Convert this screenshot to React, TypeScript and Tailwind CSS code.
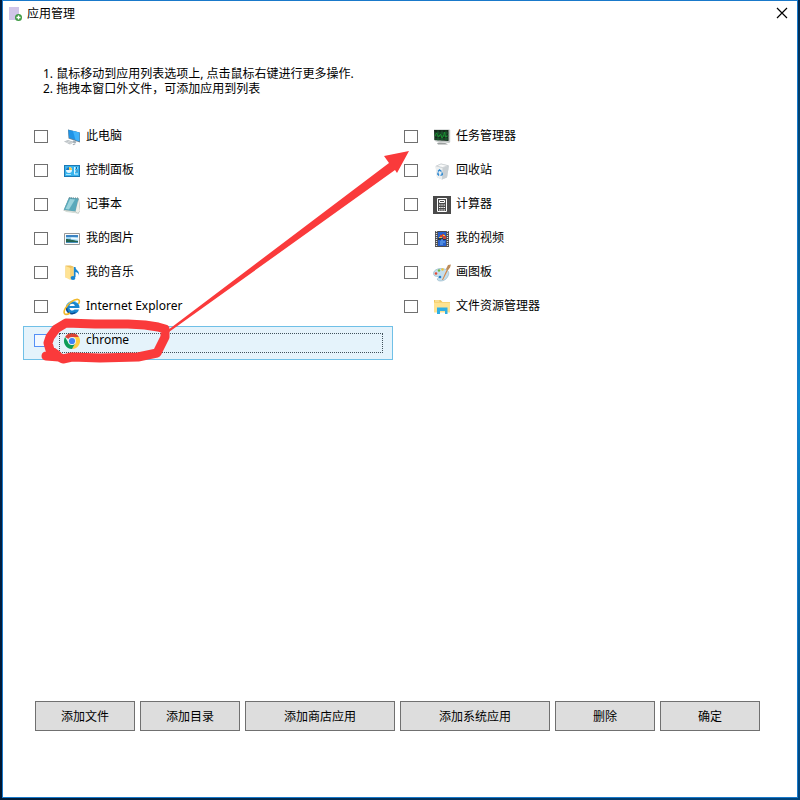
import { useState } from "react";
import type { ReactNode } from "react";

interface IApp {
	name: string;
	icon: ReactNode;
}

function Icon({ children }: { children: ReactNode }) {
	return (
		<svg className="w-[18px] h-[18px] shrink-0" viewBox="0 0 18 18" aria-hidden="true">
			{children}
		</svg>
	);
}

const ComputerIcon = () => (
	<Icon>
		<path d="M5 1.500 17 4.500V14.500L5.500 10.500Z" fill="#6c8292" />
		<path d="M5.300 1.800 16.300 4.500V13.300L6 9.800Z" fill="#1f93e6" />
		<path d="M10 3 16.300 4.500V13.300L12.500 12Z" fill="#3fb2fb" />
		<path d="M10 12.500 13.500 13.500 12.500 15.500 9.500 14.500Z" fill="#a4b0b8" />
		<path d="M1 13.500 5 12 11 14 7 16.500Z" fill="#aeb5ba" />
		<path d="M2.500 13.700 8 15.500M4.500 13 9.500 14.600" stroke="#e9eced" strokeWidth=".7" />
		<path d="M9.500 16.300 11.500 15.500 12.500 16.200 10.500 17.200Z" fill="#a5adb2" />
	</Icon>
);

const ControlPanelIcon = () => (
	<Icon>
		<path d="M1 3h16v12H1z" fill="#1c79b4" />
		<path d="M2 4h14v10H2z" fill="#37b3ee" />
		<circle cx="6" cy="8" r="3" fill="#e7f7ff" />
		<path d="M6 8V5a3 3 0 0 0-3 3z" fill="#167ac5" />
		<path d="M6 8h3a3 3 0 0 0-3-3z" fill="#f5c84c" />
		<path d="M11 6h4M11 9h4M11 12h4" stroke="#d9f5ff" />
		<path d="M11.500 5v7" stroke="#d9f5ff" />
		<path d="M13.500 5v2M14 8v2" stroke="#15679b" />
		<path d="M3 12.500h5" stroke="#a5e6ff" />
	</Icon>
);

const NotepadIcon = () => (
	<Icon>
		<path d="M6 1.500 16 2.500 17 15 15.500 17.500 .5 14.500Z" fill="#8d9a9a" />
		<path d="M6 1.500 15.500 2.500 12.500 15.500 .8 13.800Z" fill="#5aa9bb" />
		<path d="M7 3 12 3.500 6 13.500 2.500 13Z" fill="#9ad3dc" />
		<path d="M15.500 3 17 15 15 17.200 12.500 15.500Z" fill="#eeefe9" />
		<path d="M.8 14 12.500 15.500 15 17.500 3 16Z" fill="#d6ded8" />
		<path d="M6 2h9.500" stroke="#68868d" strokeDasharray="1 1" />
	</Icon>
);

const PictureIcon = () => (
	<Icon>
		<path d="M1.500 3.500h15v11h-15z" fill="#fafafa" stroke="#989898" />
		<path d="M3 5h12v8H3z" fill="#9bd3f3" />
		<path d="M3 5h12v2H3z" fill="#3b83c3" />
		<path d="M3 9c4 0 6 1 12 2v2H3z" fill="#22634f" />
		<path d="M3 12.500h12" stroke="#4a91bd" />
		<path d="M8 8.500c2-.7 4 .5 7 .5" stroke="#effaff" strokeWidth="1.500" fill="none" />
	</Icon>
);

const MusicIcon = () => (
	<Icon>
		<path d="M2.500 1.500h5l3 1v12l-8-1z" fill="#eec260" />
		<path d="m2.500 2 5 2v12l-5-2.500z" fill="#ffe394" />
		<path d="M7.500 4 10.500 3v11l-3 2z" fill="#f7d377" />
		<path d="M11.700 3v10" stroke="#1685d2" strokeWidth="1.700" />
		<path d="M12 3c0 3 5 3 4 9 0-3-2-4-4-4z" fill="#1685d2" />
		<ellipse cx="10" cy="14" rx="2.400" ry="2" fill="#1685d2" />
	</Icon>
);

const ExplorerIcon = () => (
	<Icon>
		<path d="M16 11.500h-4.500c-1.500 2-5 1-5-1.500H16.500c.5-9-13.500-9-13.500-.5 0 8.500 11.500 8.500 13 2zM6.500 8c.4-3 5-3 5.300 0z" fill="#1986cf" />
		<path d="M4 7c1.500-4 7-5 10-2" stroke="#79d5f7" fill="none" />
		<path d="M3.500 9.500c0 6 5 7.500 9 5" stroke="#0b478d" strokeWidth="1.400" fill="none" />
		<path d="M15.500 6C18.500 0 13 .5 8 4 3 8 0 13 1.500 15.500c1 1.500 3.500.7 5.500-.5" stroke="#f0b82c" strokeWidth="1.600" fill="none" />
	</Icon>
);

const ChromeIcon = () => (
	<Icon>
		<path d="M9 9 2.070 5A8 8 0 0 1 15.930 5H9z" fill="#db4437" />
		<path d="M9 5h6.930A8 8 0 0 1 9 17l3.460-6z" fill="#ffcd40" />
		<path d="M2.070 5 5.540 11 9 13l3.460-2L9 17A8 8 0 0 1 2.070 5z" fill="#0f9d58" />
		<circle cx="9" cy="9" r="4" fill="#f1f1f1" />
		<circle cx="9" cy="9" r="3.100" fill="#4285f4" />
	</Icon>
);

const TaskIcon = () => (
	<Icon>
		<path d="M1 1.500h15.500l.7 1v11.500l-1 1L3 13.500 1 12z" fill="#bfc4c3" />
		<path d="M1 2h14.500v11L1.500 12z" fill="#17291d" />
		<path d="M1.500 5h14M1.500 8h14M1.500 11h14M5 2.500v10M9 2.500v10M13 2.500v10" stroke="#1c6b35" strokeWidth=".8" />
		<path d="m2 8 1.500-3 2 4 2-3 1.500 4 1.500-2 1-4 1 5 2-1" stroke="#1a9432" fill="none" />
		<path d="M4 15c5-1 9 0 11 1.500H5z" fill="#9b9f9f" />
	</Icon>
);

const RecycleIcon = () => (
	<Icon>
		<path d="M2.500 4 8 1.500l8 2-2 12-5 2-5-2z" fill="#d7dcdf" />
		<path d="m2.500 4 7 2 6.500-2.500-2 12-5 2-5-2z" fill="#eceff0" />
		<path d="m9.500 6 6.500-2.500-2 12-5 2z" fill="#c9cfd3" />
		<path d="m3.500 4 4.500-2 7 1.700L9.500 5.500z" fill="#f9fafa" stroke="#b8bec2" strokeWidth=".5" />
		<path d="m5 9.500 1.500-1.500 2 1.500M9 10.500l.3 2-1.800 1M6 13.500 4.800 12l.5-1.500" stroke="#2b87d1" strokeWidth="1.400" fill="none" />
	</Icon>
);

const CalculatorIcon = () => (
	<Icon>
		<path d="M0 0h18v18H0z" fill="#4a4a4a" />
		<path d="M4.500 2.500h9v13h-9z" fill="none" stroke="#fff" />
		<path d="M6.500 4.500h5v2h-5z" fill="none" stroke="#fff" />
		<path d="M6 9h6M6 11.500h6M6 14h6" stroke="#fff" strokeWidth="1.200" strokeDasharray="1.500 .75" />
	</Icon>
);

const VideoIcon = () => (
	<Icon>
		<path d="M2 1h14v16H2z" fill="#4c4d50" />
		<path d="M3.500 1v16M14.500 1v16" stroke="#e0e0e0" strokeWidth="1.300" strokeDasharray="1 1" />
		<path d="M5 2h8v14H5z" fill="#285fca" />
		<path d="M5 8h8v2H5z" fill="#233652" />
		<path d="M9 4h2v2h2v3h-3V7H7V5h2z" fill="#c84536" />
		<path d="M6 7h3v1H6zM10 5h2v1h-2z" fill="#f4c53a" />
		<path d="M9 9v2M7 12h5M7 14h3" stroke="#73b7f4" />
	</Icon>
);

const PaintIcon = () => (
	<Icon>
		<path d="M.5 9.500c0-4 6-6 11-4.500 5 1 5 5 3 8-2 4-8 5-10 3-1-2 2-2 1-3s-5 0-5-3.500z" fill="#c4dfed" stroke="#8caec1" strokeWidth=".6" />
		<circle cx="3" cy="9.500" r="1.300" fill="#e44a37" />
		<circle cx="6" cy="6.500" r="1.200" fill="#75b843" />
		<circle cx="9.500" cy="5.500" r="1.200" fill="#f2c435" />
		<circle cx="7" cy="13" r="1.300" fill="#287fd0" />
		<path d="m9 16 4.500-10 1 1-4.500 9z" fill="#d88848" />
		<path d="m13 5 2-4 3-.5-1 3-2.500 3.500z" fill="#bd8c5b" />
	</Icon>
);

const FolderIcon = () => (
	<Icon>
		<path d="M1 2h6.500l2 2H17v10H1z" fill="#f1c65b" />
		<path d="M2 3h4.500" stroke="#fff4c9" />
		<path d="M1 4.500h16v10H1z" fill="#ffe391" />
		<path d="M4 9.500h10.500V16H12v-3H7v3H4z" fill="#31afe4" />
	</Icon>
);

const apps: IApp[] = [
	{ name: "此电脑", icon: <ComputerIcon /> },
	{ name: "任务管理器", icon: <TaskIcon /> },
	{ name: "控制面板", icon: <ControlPanelIcon /> },
	{ name: "回收站", icon: <RecycleIcon /> },
	{ name: "记事本", icon: <NotepadIcon /> },
	{ name: "计算器", icon: <CalculatorIcon /> },
	{ name: "我的图片", icon: <PictureIcon /> },
	{ name: "我的视频", icon: <VideoIcon /> },
	{ name: "我的音乐", icon: <MusicIcon /> },
	{ name: "画图板", icon: <PaintIcon /> },
	{ name: "Internet Explorer", icon: <ExplorerIcon /> },
	{ name: "文件资源管理器", icon: <FolderIcon /> },
	{ name: "chrome", icon: <ChromeIcon /> },
];

const actions = [
	{ label: "添加文件", width: "w-[100px]" },
	{ label: "添加目录", width: "w-[100px]" },
	{ label: "添加商店应用", width: "w-[150px]" },
	{ label: "添加系统应用", width: "w-[150px]" },
	{ label: "删除", width: "w-[100px]" },
	{ label: "确定", width: "w-[100px]" },
];

export default function App() {
	const [checked, setChecked] = useState<string[]>([]);
	const [selected, setSelected] = useState("chrome");

	const toggle = (name: string) => {
		setSelected(name);
		setChecked(
			checked.includes(name) ? checked.filter((item) => item !== name) : [...checked, name]
		);
	};

	return (
		<div className="min-h-screen flex flex-col bg-[#003462] font-['Noto_Sans','Noto_Sans_CJK_SC',sans-serif] text-[12px] text-black">
			<div className="flex-1 flex">
				<div className="w-[2px] bg-linear-to-b from-[#001b3d] via-[#00234b] to-[#001630]" />
				<main className="relative flex-1 flex flex-col bg-white border border-[#1979ca]">
					<header className="h-6 flex items-center justify-between pl-[6px] pr-[9px]">
						<div className="flex items-center gap-[4px] pt-px">
							<svg className="w-[14px] h-[16px]" viewBox="0 0 14 16" aria-hidden="true">
								<path d="M0 1h10v13H0z" fill="#d0c5e8" />
								<circle cx="9.500" cy="11.500" r="3.500" fill="#3f9b45" />
								<path d="M9.500 9.500v4M7.500 11.500h4" stroke="#fff" strokeWidth="1.300" />
							</svg>
							<h1>应用管理</h1>
						</div>
						<button type="button" aria-label="关闭" className="w-[12px] h-[12px]">
							<svg className="w-full h-full" viewBox="0 0 12 12" aria-hidden="true">
								<path d="m1 1 10 10M11 1 1 11" stroke="#000" strokeWidth="1.200" />
							</svg>
						</button>
					</header>

					<ol className="mt-[41px] pl-10 leading-[15px]">
						<li>1. 鼠标移动到应用列表选项上, 点击鼠标右键进行更多操作.</li>
						<li>2. 拖拽本窗口外文件，可添加应用到列表</li>
					</ol>

					<ul className="mt-[26px] pl-5 pr-[34px] grid grid-cols-2">
						{apps.map((app) => {
							const active = app.name === selected;
							return (
								<li
									key={app.name}
									className={`relative h-[34px] border ${
										active ? "bg-[#e5f3fb] border-[#70c0e7]" : "border-transparent"
									}`}
								>
									<label className="h-[26px] flex items-center pl-[10px]">
										<input
											type="checkbox"
											checked={checked.includes(app.name)}
											onChange={() => toggle(app.name)}
											className={`appearance-none w-[14px] h-[13px] border checked:bg-[#4d90fe] ${
												active ? "border-[#5590f6] bg-[#f3f8ff]" : "border-[#707070] bg-white"
											}`}
										/>
										<span className="ml-[15px] mr-[5px] pt-[2px]">{app.icon}</span>
										<span>{app.name}</span>
									</label>
									{active && (
										<span className="absolute left-[35px] right-[9px] top-[6px] bottom-[6px] border border-dotted border-[#40515a] pointer-events-none" />
									)}
								</li>
							);
						})}
					</ul>

					<footer className="mt-auto mb-[66px] pl-8 flex gap-[5px]">
						{actions.map((action) => (
							<button
								key={action.label}
								type="button"
								className={`h-[30px] pt-[2px] bg-[#dddddd] border border-[#707070] ${action.width}`}
							>
								{action.label}
							</button>
						))}
					</footer>

					<svg
						className="absolute left-[37px] top-[146px] w-[372px] h-[218px] pointer-events-none"
						viewBox="40 147 372 218"
						aria-hidden="true"
					>
						<path d="M168 330 389 163 384 156 409 151 397 173 395 170 169 332Z" fill="#fa3a3b" />
						<path
							d="M46 356 59 357 63 359 72 357 100 358 138 357 157 353 161 345 165 337 165 329 158 327 145 325 128 324 95 324 66 323 56 329 50 337 48 343 50 350 57 355"
							fill="none"
							stroke="#fa3a3b"
							strokeWidth="9"
							strokeLinecap="round"
							strokeLinejoin="round"
						/>
					</svg>
				</main>
				<div className="w-[2px] bg-linear-to-b from-[#00284e] via-[#0a8bd0] to-[#00447c]" />
			</div>
			<div className="h-[2px] bg-linear-to-r from-[#001c38] to-[#00447c]" />
		</div>
	);
}
